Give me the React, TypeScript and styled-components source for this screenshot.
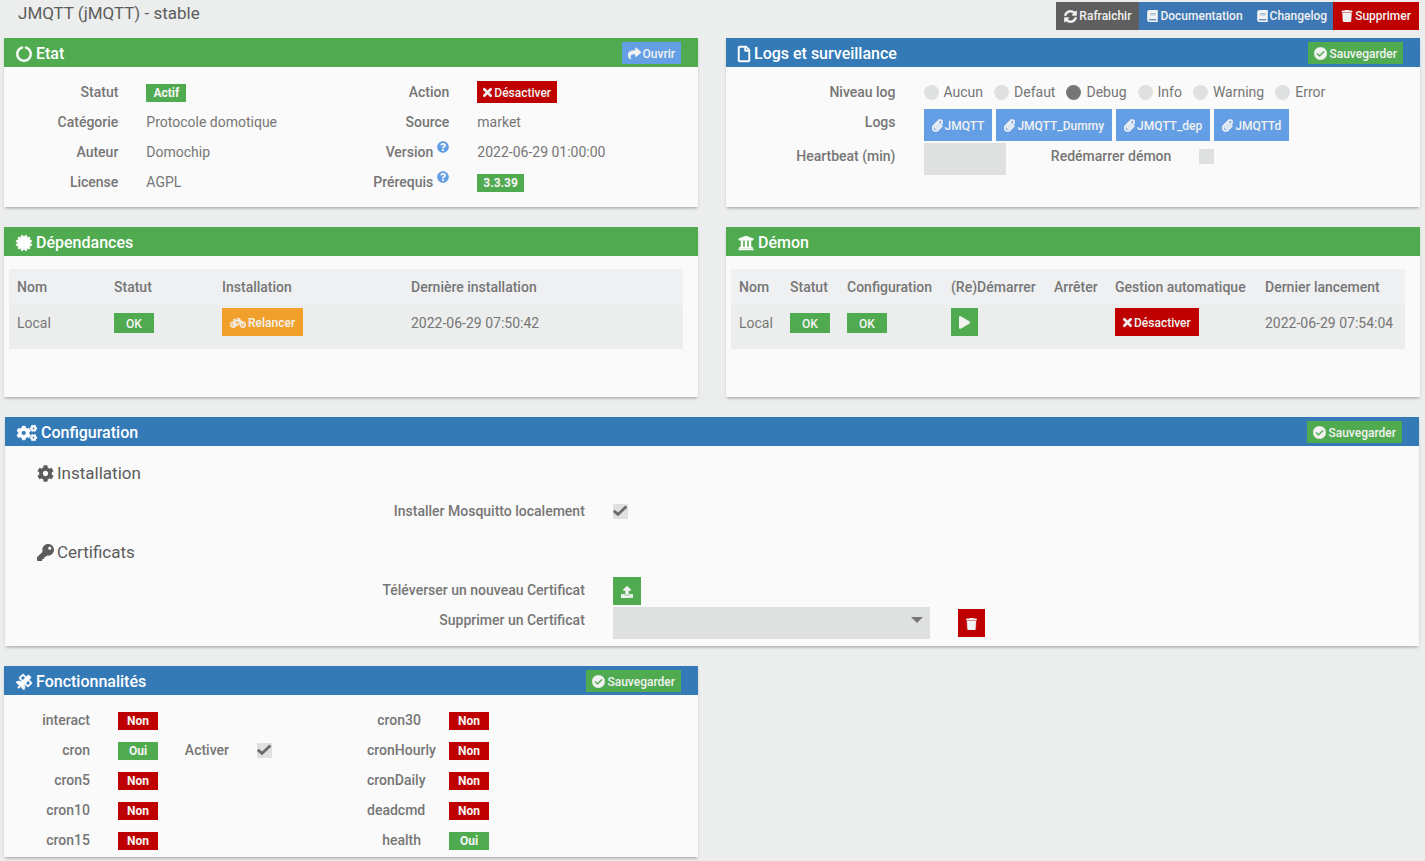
import React from 'react';
import styled, { createGlobalStyle, css } from 'styled-components';
import {
  FaBicycle,
  FaBook,
  FaCertificate,
  FaCheckCircle,
  FaCircleNotch,
  FaCog,
  FaCogs,
  FaKey,
  FaPaperclip,
  FaPlay,
  FaQuestionCircle,
  FaRegFile,
  FaSatellite,
  FaShare,
  FaSyncAlt,
  FaTimes,
  FaTrash,
  FaUniversity,
  FaUpload,
} from 'react-icons/fa';

const color = {
  page: '#eceeed',
  panel: '#fafafa',
  field: '#dfe1e0',
  text: '#767676',
  title: '#5c5c5c',
  green: '#50aa50',
  blue: '#337ab7',
  link: '#3c78b5',
  sky: '#649fe5',
  red: '#be0000',
  orange: '#f1a02b',
  grey: '#5f5f5f',
};

const GlobalStyle = createGlobalStyle`
  *, *::before, *::after { box-sizing: border-box; }
  body {
    margin: 0;
    background: ${color.page};
    color: ${color.text};
    font: 400 14px/20px Roboto, sans-serif;
  }
  button, input, select { font-family: inherit; }
`;

/* Icons whose glyph is narrower than it is tall. */
const CrossIcon = styled(FaTimes)`
  width: 9px;
  height: 13px;
`;
const BookIcon = styled(FaBook)`
  width: 11px;
  height: 12px;
`;
const ClipIcon = styled(FaPaperclip)`
  width: 11px;
  height: 13px;
`;
const TrashIcon = styled(FaTrash)`
  width: 11px;
  height: 12px;
`;
const PlayIcon = styled(FaPlay)`
  width: 11px;
  height: 13px;
`;
const FileIcon = styled(FaRegFile)`
  width: 12px;
  height: 16px;
`;

const Page = styled.main`
  display: flex;
  flex-direction: column;
  padding: 0 5px 4px 4px;
`;

const TopBar = styled.header`
  display: flex;
  justify-content: space-between;
  align-items: flex-start;
  height: 38px;
  padding: 2px 1px 0 14px;
`;

const PageTitle = styled.h1`
  margin: 0;
  font-size: 17px;
  font-weight: 400;
  line-height: 22px;
  color: ${color.title};
`;

const Toolbar = styled.div`
  display: flex;
  && > * { padding-top: 0; }
`;

type Size = 'xs' | 'sm' | 'md';

const sizes = {
  xs: css`height: 22px; padding: 1px 6px 0;`,
  sm: css`height: 28px; padding: 1px 8px 0;`,
  md: css`height: 32px; padding: 1px 8px 0;`,
};

const buttonLook = css<{ $tone: string; $size?: Size }>`
  display: inline-flex;
  align-items: center;
  gap: 2px;
  border: 0;
  border-radius: 0;
  background: ${(p) => p.$tone};
  color: #f2f2f2;
  font-size: 12px;
  font-weight: 500;
  line-height: 18px;
  white-space: nowrap;
  text-decoration: none;
  cursor: pointer;
  ${(p) => sizes[p.$size ?? 'sm']}
  svg {
    flex: none;
    stroke: currentColor;
    stroke-width: 16px;
  }
`;

const Button = styled.button`${buttonLook}`;
const LinkButton = styled.a`${buttonLook}`;
const DocLink = styled(LinkButton)`
  padding-right: 6px;
`;

const Columns = styled.div`
  display: grid;
  grid-template-columns: minmax(0, 1fr) minmax(0, 1fr);
  gap: 20px 28px;
`;

const Panel = styled.section<{ $wide?: boolean }>`
  background: ${color.panel};
  box-shadow: 0 2px 3px -1px rgba(0, 0, 0, 0.35);
  ${(p) => p.$wide && css`
    grid-column: 1 / -1;
    margin: 0 1px;
  `}
`;

const PanelHead = styled.div<{ $tone: string }>`
  display: flex;
  align-items: center;
  justify-content: space-between;
  height: 29px;
  padding: 1px 17px 0 12px;
  background: ${(p) => p.$tone};
  color: #fff;
`;

const PanelTitle = styled.h2`
  display: flex;
  align-items: center;
  gap: 4px;
  margin: 0;
  padding-top: 2px;
  font-size: 16px;
  font-weight: 500;
  line-height: 20px;
  svg {
    stroke: currentColor;
    stroke-width: 14px;
    overflow: visible;
  }
`;

const Body = styled.div`
  min-height: 140px;
  padding: 10px 14px 2px 18px;
`;

const ConfigBody = styled.div`
  padding: 1px 14px 7px 18px;
`;

const TableBody = styled.div`
  min-height: 141px;
  padding: 13px 15px 0 5px;
`;

const Halves = styled.div`
  display: grid;
  grid-template-columns: 1fr 1fr;
`;

const Row = styled.div<{ $cols: string }>`
  display: grid;
  grid-template-columns: ${(p) => p.$cols};
  min-height: 30px;
`;

const labelLook = css`
  display: block;
  margin: 0;
  padding: 5px 14px;
  font-weight: 500;
  line-height: 20px;
  text-align: right;
  white-space: nowrap;
`;

const Name = styled.span`${labelLook}`;
const FieldLabel = styled.label`${labelLook}`;

const CapabilityName = styled(Name)`
  display: flex;
  justify-content: flex-end;
  justify-content: safe flex-end;
`;

const Value = styled.div`
  display: flex;
  align-items: center;
  height: 30px;
  padding: 0 14px;
`;

const Field = styled.div`
  display: flex;
  align-items: center;
  gap: 4px;
  padding: 2px 14px 0;
`;

const Help = styled.span`
  display: inline-flex;
  align-items: center;
  height: 0;
  margin-left: 4px;
  color: ${color.sky};
  vertical-align: 4px;
`;

const Badge = styled.span<{ $tone: string; $tall?: boolean }>`
  display: inline-block;
  min-width: 40px;
  height: ${(p) => (p.$tall ? 20 : 18)}px;
  margin-top: ${(p) => (p.$tall ? 0 : 2)}px;
  padding: 0 6px;
  background: ${(p) => p.$tone};
  color: #f6f6f6;
  font-size: 12px;
  font-weight: ${(p) => (p.$tall ? 500 : 700)};
  line-height: ${(p) => (p.$tall ? 22 : 18)}px;
  text-align: center;
`;

const Levels = styled.div`
  display: flex;
  align-items: center;
  gap: 11px;
  height: 30px;
  padding: 0 14px;
`;

const Level = styled.label`
  display: flex;
  align-items: center;
  gap: 5px;
`;

const Radio = styled.input`
  appearance: none;
  width: 15px;
  height: 15px;
  margin: 1px 0 0;
  border-radius: 50%;
  background: ${color.field};
  &:checked { background: ${color.text}; }
`;

const CheckWrap = styled.span`
  display: inline-grid;
  place-items: center;
  > * { grid-area: 1 / 1; }
  svg { pointer-events: none; }
`;

const CheckInput = styled.input`
  appearance: none;
  width: 15px;
  height: 15px;
  margin: 0;
  background: ${color.field};
`;

const CheckCell = styled.div`
  padding: 8px 14px 0;
  line-height: 0;
`;

const TextInput = styled.input`
  width: 100%;
  height: 32px;
  padding: 0 8px;
  border: 0;
  background: ${color.field};
  color: ${color.text};
`;

const SelectWrap = styled.div`
  display: grid;
  width: 100%;
  align-items: center;
  > * { grid-area: 1 / 1; }
  svg { justify-self: end; margin: 0 7px 6px 0; pointer-events: none; }
`;

const Select = styled.select`
  appearance: none;
  width: 100%;
  height: 32px;
  border: 0;
  border-radius: 0;
  background: ${color.field};
  color: ${color.text};
`;

const SectionTitle = styled.h3`
  display: flex;
  align-items: center;
  gap: 3px;
  height: 30px;
  margin: 11px 14px 8px;
  font-size: 17px;
  font-weight: 400;
  color: ${color.title};
`;

const Table = styled.table`
  width: 100%;
  table-layout: fixed;
  border-collapse: collapse;
  th {
    height: 36px;
    padding: 0 8px;
    background: #eff0f2;
    font-weight: 500;
    text-align: left;
    white-space: nowrap;
  }
  td {
    height: 44px;
    padding: 3px 8px 0;
    background: ${color.page};
    vertical-align: top;
    white-space: nowrap;
  }
`;

const Cell = styled.div`
  display: flex;
  align-items: center;
  height: 30px;
`;

const ButtonCell = styled.div`
  display: flex;
`;

function Check({ id, checked }: { id: string; checked?: boolean }) {
  const [on, setOn] = React.useState(!!checked);
  return (
    <CheckWrap>
      <CheckInput type="checkbox" id={id} checked={on} onChange={() => setOn(!on)} />
      {on && (
        <svg width="15" height="15" viewBox="0 0 15 15" aria-hidden="true">
          <path d="M0.8 6.8 L5 10.4 L13.4 2.4" fill="none" stroke="#6a6a6a" strokeWidth="2.8" />
        </svg>
      )}
    </CheckWrap>
  );
}

function SaveButton() {
  return (
    <Button type="button" $tone={color.green} $size="xs">
      <FaCheckCircle size={13} /> Sauvegarder
    </Button>
  );
}

const logLevels = ['Aucun', 'Defaut', 'Debug', 'Info', 'Warning', 'Error'];
const logFiles = ['JMQTT', 'JMQTT_Dummy', 'JMQTT_dep', 'JMQTTd'];
const leftCapabilities = [
  { name: 'interact', ok: false },
  { name: 'cron', ok: true, toggle: true },
  { name: 'cron5', ok: false },
  { name: 'cron10', ok: false },
  { name: 'cron15', ok: false },
];
const rightCapabilities = [
  { name: 'cron30', ok: false },
  { name: 'cronHourly', ok: false },
  { name: 'cronDaily', ok: false },
  { name: 'deadcmd', ok: false },
  { name: 'health', ok: true },
];

const stateCols = 'minmax(0, 1fr) minmax(0, 2fr)';
const capabilityCols = '82px 56px 83px minmax(0, 1fr)';
const logCols = 'minmax(0, 3fr) minmax(0, 9fr)';
const restartCols = 'minmax(0, 3fr) minmax(0, 2fr) minmax(0, 3fr) minmax(0, 4fr)';
const configCols = 'minmax(0, 5fr) minmax(0, 3fr) minmax(0, 4fr)';

function Capability({ name, ok, toggle }: { name: string; ok: boolean; toggle?: boolean }) {
  return (
    <Row $cols={capabilityCols}>
      <CapabilityName>{name}</CapabilityName>
      <Value><Badge $tone={ok ? color.green : color.red}>{ok ? 'Oui' : 'Non'}</Badge></Value>
      {toggle && (
        <>
          <FieldLabel htmlFor={`toggle-${name}`}>Activer</FieldLabel>
          <CheckCell><Check id={`toggle-${name}`} checked /></CheckCell>
        </>
      )}
    </Row>
  );
}

export default function App() {
  const [level, setLevel] = React.useState('Debug');
  return (
    <>
      <GlobalStyle />
      <Page>
        <TopBar>
          <PageTitle>JMQTT (jMQTT) - stable</PageTitle>
          <Toolbar>
            <Button type="button" $tone={color.grey}><FaSyncAlt size={13} /> Rafraichir</Button>
            <DocLink href="#documentation" $tone={color.link}><BookIcon /> Documentation</DocLink>
            <DocLink href="#changelog" $tone={color.link}><BookIcon /> Changelog</DocLink>
            <Button type="button" $tone={color.red}><FaTrash size={12} /> Supprimer</Button>
          </Toolbar>
        </TopBar>

        <Columns>
          <Panel>
            <PanelHead $tone={color.green}>
              <PanelTitle><FaCircleNotch size={16} /> Etat</PanelTitle>
              <Button type="button" $tone={color.sky} $size="xs"><FaShare size={13} /> Ouvrir</Button>
            </PanelHead>
            <Body>
              <Halves>
                <div>
                  <Row $cols={stateCols}><Name>Statut</Name><Value><Badge $tone={color.green}>Actif</Badge></Value></Row>
                  <Row $cols={stateCols}><Name>Catégorie</Name><Value>Protocole domotique</Value></Row>
                  <Row $cols={stateCols}><Name>Auteur</Name><Value>Domochip</Value></Row>
                  <Row $cols={stateCols}><Name>License</Name><Value>AGPL</Value></Row>
                </div>
                <div>
                  <Row $cols={stateCols}>
                    <Name>Action</Name>
                    <Value><Button type="button" $tone={color.red} $size="xs"><CrossIcon /> Désactiver</Button></Value>
                  </Row>
                  <Row $cols={stateCols}><Name>Source</Name><Value>market</Value></Row>
                  <Row $cols={stateCols}><Name>Version<Help><FaQuestionCircle size={12} /></Help></Name><Value>2022-06-29 01:00:00</Value></Row>
                  <Row $cols={stateCols}><Name>Prérequis<Help><FaQuestionCircle size={12} /></Help></Name><Value><Badge $tone={color.green}>3.3.39</Badge></Value></Row>
                </div>
              </Halves>
            </Body>
          </Panel>

          <Panel>
            <PanelHead $tone={color.blue}>
              <PanelTitle><FileIcon /> Logs et surveillance</PanelTitle>
              <SaveButton />
            </PanelHead>
            <Body>
              <Row $cols={logCols}>
                <Name>Niveau log</Name>
                <Levels>
                  {logLevels.map((l) => (
                    <Level key={l}>
                      <Radio type="radio" name="level" checked={level === l} onChange={() => setLevel(l)} />
                      {l}
                    </Level>
                  ))}
                </Levels>
              </Row>
              <Row $cols={logCols}>
                <Name>Logs</Name>
                <Field>
                  {logFiles.map((f) => (
                    <LinkButton key={f} href={`#${f}`} $tone={color.sky} $size="md"><ClipIcon /> {f}</LinkButton>
                  ))}
                </Field>
              </Row>
              <Row $cols={restartCols}>
                <FieldLabel htmlFor="heartbeat">Heartbeat (min)</FieldLabel>
                <Field><TextInput id="heartbeat" type="text" /></Field>
                <FieldLabel htmlFor="restart">Redémarrer démon</FieldLabel>
                <CheckCell><Check id="restart" /></CheckCell>
              </Row>
            </Body>
          </Panel>

          <Panel>
            <PanelHead $tone={color.green}>
              <PanelTitle><FaCertificate size={16} /> Dépendances</PanelTitle>
            </PanelHead>
            <TableBody>
              <Table>
                <colgroup>
                  <col width="97" /><col width="108" /><col width="189" /><col width="280" />
                </colgroup>
                <thead>
                  <tr><th>Nom</th><th>Statut</th><th>Installation</th><th>Dernière installation</th></tr>
                </thead>
                <tbody>
                  <tr>
                    <td><Cell>Local</Cell></td>
                    <td><Cell><Badge $tone={color.green} $tall>OK</Badge></Cell></td>
                    <td><ButtonCell><Button type="button" $tone={color.orange}><FaBicycle size={16} /> Relancer</Button></ButtonCell></td>
                    <td><Cell>2022-06-29 07:50:42</Cell></td>
                  </tr>
                </tbody>
              </Table>
            </TableBody>
          </Panel>

          <Panel>
            <PanelHead $tone={color.green}>
              <PanelTitle><FaUniversity size={16} /> Démon</PanelTitle>
            </PanelHead>
            <TableBody>
              <Table>
                <colgroup>
                  <col width="51" /><col width="57" /><col width="104" /><col width="103" />
                  <col width="61" /><col width="150" /><col width="148" />
                </colgroup>
                <thead>
                  <tr>
                    <th>Nom</th><th>Statut</th><th>Configuration</th><th>(Re)Démarrer</th>
                    <th>Arrêter</th><th>Gestion automatique</th><th>Dernier lancement</th>
                  </tr>
                </thead>
                <tbody>
                  <tr>
                    <td><Cell>Local</Cell></td>
                    <td><Cell><Badge $tone={color.green} $tall>OK</Badge></Cell></td>
                    <td><Cell><Badge $tone={color.green} $tall>OK</Badge></Cell></td>
                    <td><ButtonCell><Button type="button" aria-label="Démarrer" $tone={color.green}><PlayIcon /></Button></ButtonCell></td>
                    <td />
                    <td><ButtonCell><Button type="button" $tone={color.red}><CrossIcon /> Désactiver</Button></ButtonCell></td>
                    <td><Cell>2022-06-29 07:54:04</Cell></td>
                  </tr>
                </tbody>
              </Table>
            </TableBody>
          </Panel>

          <Panel $wide>
            <PanelHead $tone={color.blue}>
              <PanelTitle><FaCogs size={20} /> Configuration</PanelTitle>
              <SaveButton />
            </PanelHead>
            <ConfigBody>
              <SectionTitle><FaCog size={17} /> Installation</SectionTitle>
              <Row $cols={configCols}>
                <FieldLabel htmlFor="mosquitto">Installer Mosquitto localement</FieldLabel>
                <CheckCell><Check id="mosquitto" checked /></CheckCell>
              </Row>
              <SectionTitle><FaKey size={17} /> Certificats</SectionTitle>
              <Row $cols={configCols}>
                <Name>Téléverser un nouveau Certificat</Name>
                <Field><Button type="button" aria-label="Téléverser" $tone={color.green}><FaUpload size={12} /></Button></Field>
              </Row>
              <Row $cols={configCols}>
                <FieldLabel htmlFor="certificate">Supprimer un Certificat</FieldLabel>
                <Field>
                  <SelectWrap>
                    <Select id="certificate" />
                    <svg width="12" height="6" viewBox="0 0 12 6" aria-hidden="true"><path d="M0 0h12L6 6z" fill={color.text} /></svg>
                  </SelectWrap>
                </Field>
                <Field>
                  <Button type="button" aria-label="Supprimer le certificat" $tone={color.red}><TrashIcon /></Button>
                </Field>
              </Row>
            </ConfigBody>
          </Panel>

          <Panel>
            <PanelHead $tone={color.blue}>
              <PanelTitle><FaSatellite size={16} /> Fonctionnalités</PanelTitle>
              <SaveButton />
            </PanelHead>
            <Body>
              <Halves>
                <div>{leftCapabilities.map((c) => <Capability key={c.name} {...c} />)}</div>
                <div>{rightCapabilities.map((c) => <Capability key={c.name} {...c} />)}</div>
              </Halves>
            </Body>
          </Panel>
        </Columns>
      </Page>
    </>
  );
}
